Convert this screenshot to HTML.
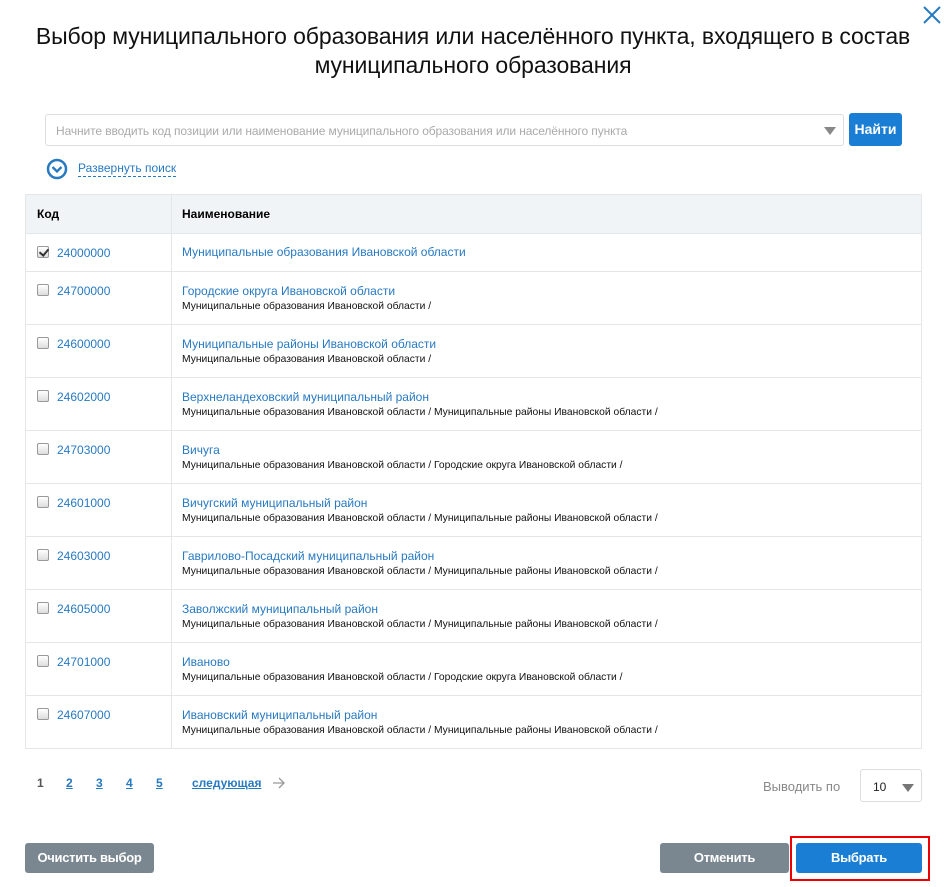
<!DOCTYPE html>
<html><head><meta charset="utf-8"><style>
*{box-sizing:border-box;margin:0;padding:0}
body{width:946px;height:887px;background:#fff;font-family:"Liberation Sans",Arial,sans-serif;position:relative;overflow:hidden;color:#000}
.title{position:absolute;left:0;width:946px;top:22px;text-align:center;font-size:23px;line-height:29px;letter-spacing:-0.1px;color:#111}
.close{position:absolute;left:922px;top:5px}
.search{position:absolute;left:45px;top:114px;width:799px;height:32px;border:1px solid #ddd;border-radius:3px;font-size:12px;color:#aaa;padding:9px 10px;letter-spacing:-0.1px}
.search .tri{position:absolute;right:7px;top:12px;width:0;height:0;border-left:6px solid transparent;border-right:6px solid transparent;border-top:8px solid #888}
.find{position:absolute;left:849px;top:113px;width:53px;height:33px;background:#1a7fd4;border-radius:3px;color:#fff;font-size:14px;font-weight:bold;text-align:center;line-height:33px}
.exp{position:absolute;left:46px;top:158px}
.expt{position:absolute;left:78px;top:161px;font-size:12px;color:#2779c2;border-bottom:1px dashed #2779c2;line-height:15px}
table{position:absolute;left:25px;top:194px;width:897px;border-collapse:collapse;border:1px solid #e4e6e8}
td,th{border-bottom:1px solid #e4e6e8;vertical-align:top;text-align:left}
th{background:#f1f4f7;height:39px;font-size:12px;font-weight:bold;padding-top:12px}
th.c1,td.c1{width:146px;border-right:1px solid #e4e6e8;padding-left:11px}
th.c2,td.c2{padding-left:10px}
tr.r td{height:53px;padding-top:12px}
tr.r td.c1{padding-top:10px}
tr.f td{height:38px}
.code{color:#2779c2;font-size:12px;display:inline-block;margin-left:8px}
.cb{display:inline-block;width:12px;height:12px;border:1px solid #999;border-radius:2px;background:linear-gradient(#fff,#ddd);vertical-align:-1px;position:relative}
.cb.on::after{content:"";position:absolute;left:3px;top:0px;width:4px;height:7px;border:solid #333;border-width:0 2px 2px 0;transform:rotate(40deg)}
.nm{color:#2779c2;font-size:12px;line-height:14px}
.sub{font-size:10.3px;line-height:12px;margin-top:3px;color:#111}
.pg{position:absolute;top:776px;font-size:12px;font-weight:bold;color:#2779c2;text-decoration:underline}
.vp{position:absolute;left:763px;top:779px;font-size:13px;color:#888}
.sel{position:absolute;left:860px;top:769px;width:62px;height:33px;border:1px solid #ddd;border-radius:3px;font-size:12px;padding:10px 12px;color:#222}
.sel .tri{position:absolute;right:7px;top:14px;border-left:6px solid transparent;border-right:6px solid transparent;border-top:8px solid #777}
.btn{position:absolute;top:843px;height:30px;border-radius:3px;color:#fff;font-size:13px;font-weight:bold;text-align:center;line-height:30px;letter-spacing:-0.3px}
</style></head><body>
<div class="title">Выбор муниципального образования или населённого пункта, входящего в состав<br>муниципального образования</div>
<svg class="close" width="20" height="20" viewBox="0 0 20 20"><path d="M2 2L18 18M18 2L2 18" stroke="#2779c2" stroke-width="2"/></svg>
<div class="search">Начните вводить код позиции или наименование муниципального образования или населённого пункта<div class="tri"></div></div>
<div class="find">Найти</div>
<svg class="exp" width="22" height="22" viewBox="0 0 22 22"><circle cx="11" cy="11" r="9" fill="none" stroke="#2779c2" stroke-width="2.5"/><path d="M6.5 9L11 13.5L15.5 9" fill="none" stroke="#2779c2" stroke-width="2.3"/></svg>
<div class="expt">Развернуть поиск</div>
<table>
<tr><th class="c1">Код</th><th class="c2">Наименование</th></tr>
<tr class="f"><td class="c1" style="padding-top:10px"><span class="cb on"></span><span class="code">24000000</span></td><td class="c2" style="padding-top:11px"><div class="nm">Муниципальные образования Ивановской области</div></td></tr>
<tr class="r"><td class="c1"><span class="cb"></span><span class="code">24700000</span></td><td class="c2"><div class="nm">Городские округа Ивановской области</div><div class="sub">Муниципальные образования Ивановской области /</div></td></tr>
<tr class="r"><td class="c1"><span class="cb"></span><span class="code">24600000</span></td><td class="c2"><div class="nm">Муниципальные районы Ивановской области</div><div class="sub">Муниципальные образования Ивановской области /</div></td></tr>
<tr class="r"><td class="c1"><span class="cb"></span><span class="code">24602000</span></td><td class="c2"><div class="nm">Верхнеландеховский муниципальный район</div><div class="sub">Муниципальные образования Ивановской области / Муниципальные районы Ивановской области /</div></td></tr>
<tr class="r"><td class="c1"><span class="cb"></span><span class="code">24703000</span></td><td class="c2"><div class="nm">Вичуга</div><div class="sub">Муниципальные образования Ивановской области / Городские округа Ивановской области /</div></td></tr>
<tr class="r"><td class="c1"><span class="cb"></span><span class="code">24601000</span></td><td class="c2"><div class="nm">Вичугский муниципальный район</div><div class="sub">Муниципальные образования Ивановской области / Муниципальные районы Ивановской области /</div></td></tr>
<tr class="r"><td class="c1"><span class="cb"></span><span class="code">24603000</span></td><td class="c2"><div class="nm">Гаврилово-Посадский муниципальный район</div><div class="sub">Муниципальные образования Ивановской области / Муниципальные районы Ивановской области /</div></td></tr>
<tr class="r"><td class="c1"><span class="cb"></span><span class="code">24605000</span></td><td class="c2"><div class="nm">Заволжский муниципальный район</div><div class="sub">Муниципальные образования Ивановской области / Муниципальные районы Ивановской области /</div></td></tr>
<tr class="r"><td class="c1"><span class="cb"></span><span class="code">24701000</span></td><td class="c2"><div class="nm">Иваново</div><div class="sub">Муниципальные образования Ивановской области / Городские округа Ивановской области /</div></td></tr>
<tr class="r"><td class="c1"><span class="cb"></span><span class="code">24607000</span></td><td class="c2"><div class="nm">Ивановский муниципальный район</div><div class="sub">Муниципальные образования Ивановской области / Муниципальные районы Ивановской области /</div></td></tr>
</table>
<div class="pg" style="left:37px;color:#555;text-decoration:none">1</div>
<div class="pg" style="left:66px">2</div>
<div class="pg" style="left:96px">3</div>
<div class="pg" style="left:126px">4</div>
<div class="pg" style="left:156px">5</div>
<div class="pg" style="left:192px">следующая</div>
<svg style="position:absolute;left:272px;top:777px" width="14" height="12" viewBox="0 0 14 12"><path d="M1 6H12M7 1L12 6L7 11" fill="none" stroke="#999" stroke-width="1.3"/></svg>
<div class="vp">Выводить по</div>
<div class="sel">10<div class="tri"></div></div>
<div class="btn" style="left:25px;width:129px;background:#7a8790">Очистить выбор</div>
<div class="btn" style="left:660px;width:129px;background:#7a8790">Отменить</div>
<div style="position:absolute;left:790px;top:836px;width:140px;height:45px;border:2px solid #e00"></div>
<div class="btn" style="left:796px;width:126px;background:#1a7fd4">Выбрать</div>
</body></html>
